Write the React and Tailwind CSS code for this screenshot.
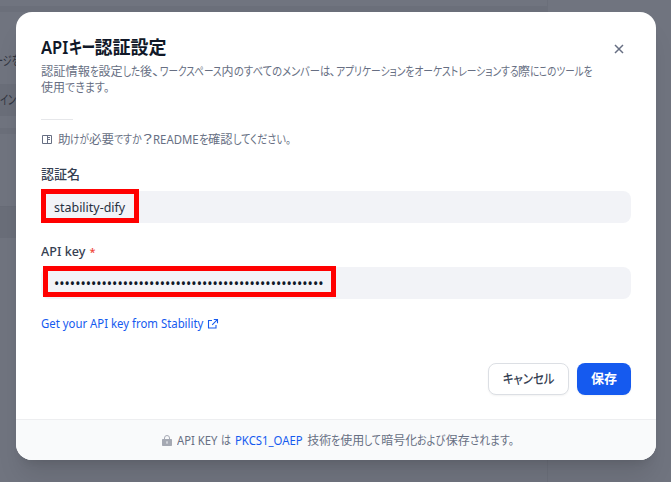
import React, { useLayoutEffect, useRef } from 'react';

const JP = "font-['Noto_Sans','Noto_Sans_CJK_JP',sans-serif] [font-feature-settings:'palt']";

// A run of text condensed horizontally so that it fills exactly `w` pixels.
function Fit({ w, children }) {
  const inner = useRef(null);
  useLayoutEffect(() => {
    const natural = inner.current.offsetWidth;
    if (natural) inner.current.style.transform = `scaleX(${w / natural})`;
  }, [w]);
  return (
    <span className="flex shrink-0 whitespace-nowrap" style={{ width: w }}>
      <span ref={inner} className="shrink-0 origin-left">{children}</span>
    </span>
  );
}

function Line({ runs }) {
  return (
    <span className="flex">
      {runs.map(([text, w], i) => <Fit key={i} w={w}>{text}</Fit>)}
    </span>
  );
}

function BookIcon() {
  return (
    <svg className="mr-[4.5px] h-3 w-3 shrink-0" viewBox="0 0 12 12" fill="none" stroke="#676f83" strokeWidth="1">
      <path d="M1.5 1.5h9v8h-9zM6.5 1.5v8M7 3.5h2M7 5.5h2" />
    </svg>
  );
}

function ExternalIcon() {
  return (
    <svg className="ml-[3.5px] h-3 w-3 shrink-0" viewBox="0 0 12 12" fill="none" stroke="#155aef" strokeWidth="1.1">
      <path d="M5 2.5H1.5v7.5h7.5V7M6.8 1.5h3.7v3.7M10.3 1.7 5.2 6.8" />
    </svg>
  );
}

function LockIcon() {
  return (
    <svg className="mr-1 h-3 w-3 shrink-0" viewBox="0 0 12 12">
      <path d="M3.5 5V3a2.5 2.5 0 0 1 5 0V5" fill="none" stroke="#a5a9b3" />
      <rect x="1" y="4" width="10" height="7" rx="0.8" fill="#a5a9b3" />
      <path d="M6 6.3v2.4" stroke="#f9fafb" />
    </svg>
  );
}

export default function App() {
  return (
    <div className={`relative h-[482px] w-[671px] overflow-hidden bg-[#70747f] ${JP}`}>
      <div className="flex h-full text-[13px] text-[#30343f]">
        <div className="w-[548px] border-r border-[#6b6f7a]">
          <div className="h-[6px]" />
          <div className="h-[6px] bg-[#6b6f7a]" />
          <div className="h-[72px] pt-[38px] leading-5">
            <div className="-ml-[6px]"><Line runs={[['ージを', 26]]} /></div>
          </div>
          <div className="h-8 bg-[#6a6e79] leading-[31px]"><Line runs={[['イン', 16]]} /></div>
          <div className="h-3" />
          <div className="h-[6px] bg-[#6b6f7a]" />
          <div className="h-[72px]" />
          <div className="h-8 border-t border-[#686c77] bg-[#6a6e79]" />
        </div>
        <div className="flex-1" />
      </div>

      <div className="absolute left-4 top-3 flex h-[448px] w-[640px] flex-col overflow-hidden rounded-2xl bg-white shadow-xl">
        <div className="flex flex-1 flex-col px-[25px]">
          <div className="flex h-[52px] items-start justify-between pt-[23px]">
            <h1 className="text-[18px] font-semibold leading-6 text-[#101828]">
              <Line runs={[['API', 27.5], ['キー', 26], ['認証設定', 72]]} />
            </h1>
            <svg className="mr-[7px] mt-[9px] h-[10px] w-[10px]" viewBox="0 0 10 10" stroke="#676f83" strokeWidth="1.5">
              <path d="m1 1 8 8M9 1 1 9" />
            </svg>
          </div>
          <p className="h-[55px] text-[12px] leading-4 text-[#676f83]">
            <Line
              runs={[
                ['認証情報', 49], ['を', 8.5], ['設定', 24], ['した', 17.5], ['後', 12], ['、', 8],
                ['ワークスペース', 61.5], ['内', 12], ['のすべてのメンバーは', 96], ['、', 6],
                ['アプリケーションをオーケストレーションする', 182.5], ['際', 12], ['にこのツールを', 62],
              ]}
            />
            <Line runs={[['使用', 24], ['できます。', 44]]} />
          </p>
          <div className="h-px w-8 bg-[#e6e7ea]" />
          <div className="mt-3 flex h-4 items-center text-[12px] leading-4 text-[#676f83]">
            <BookIcon />
            <Line
              runs={[
                ['助', 12.5], ['けが', 18.5], ['必要', 25], ['ですか', 28], ['？', 11.5],
                ['README', 45.5], ['を', 9.5], ['確認', 24.5], ['してください。', 58],
              ]}
            />
          </div>
          <div className="mt-[17px] h-5 text-[13px] font-medium leading-[19px] text-[#354052]">認証名</div>
          <div className="relative mt-[6px] flex h-8 items-center rounded-lg bg-[#f2f3f7] pl-[13px] pt-[2px] text-[13px] text-[#26303f]">
            <Fit w={71}>stability-dify</Fit>
            <div className="absolute left-0 top-[-2px] h-[34px] w-[98px] border-[5px] border-[#ff0000]" />
          </div>
          <div className="mt-[19px] flex h-5 items-center text-[13px] font-medium text-[#354052]">
            <Fit w={44.5}>API key</Fit>
            <span className="ml-1 text-[11px] text-[#f04438]">*</span>
          </div>
          <div className="relative mt-[5px] flex h-8 items-center rounded-lg bg-[#f2f3f7] pl-[13px] pt-px text-[14px] text-[#101828]">
            <Fit w={269}>{'•'.repeat(51)}</Fit>
            <div className="absolute left-[2px] top-[-1px] h-[31px] w-[293px] border-[5px] border-[#ff0000]" />
          </div>
          <div className="mt-[17px] flex h-4 items-center text-[12px] leading-4 text-[#155aef]">
            <Fit w={162}>Get your API key from Stability</Fit>
            <ExternalIcon />
          </div>
          <div className="mt-[31px] flex justify-end gap-2 text-[13px]">
            <button className="flex h-8 w-[81px] items-center justify-center rounded-lg border border-[#dcdfe4] bg-white font-medium text-[#354052] shadow-xs">
              <Fit w={51.5}>キャンセル</Fit>
            </button>
            <button className="h-8 w-[54px] rounded-lg bg-[#155aef] font-semibold text-white shadow-xs">保存</button>
          </div>
        </div>
        <div className="flex h-[41px] items-center justify-center border-t border-[#edeef0] bg-[#f9fafb] pl-[2px] pt-px text-[12px] text-[#676f83]">
          <LockIcon />
          <Fit w={40.5}>API KEY</Fit>
          <span className="ml-1"><Fit w={10}>は</Fit></span>
          <span className="mx-1 text-[#155aef]"><Fit w={68}>PKCS1_OAEP</Fit></span>
          <Line
            runs={[
              ['技術', 24], ['を', 9], ['使用', 24], ['して', 17], ['暗号化', 36],
              ['および', 28.5], ['保存', 24], ['されます。', 43.5],
            ]}
          />
        </div>
      </div>
    </div>
  );
}
